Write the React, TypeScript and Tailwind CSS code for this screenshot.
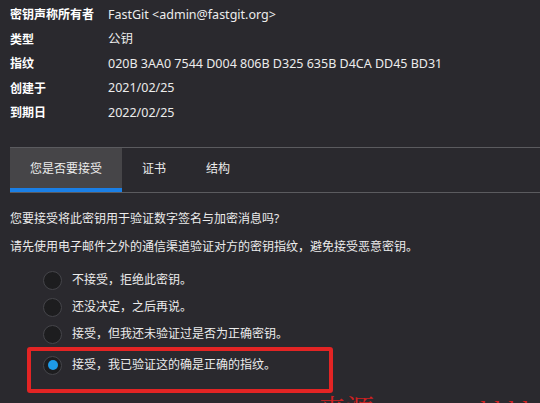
import React from 'react';

const details = [
  { label: '密钥声称所有者', value: 'FastGit <admin@fastgit.org>' },
  { label: '类型', value: '公钥' },
  { label: '指纹', value: '020B 3AA0 7544 D004 806B D325 635B D4CA DD45 BD31' },
  { label: '创建于', value: '2021/02/25' },
  { label: '到期日', value: '2022/02/25' },
];

const tabs = ['您是否要接受', '证书', '结构'];

const choices = [
  '不接受，拒绝此密钥。',
  '还没决定，之后再说。',
  '接受，但我还未验证过是否为正确密钥。',
];

function Radio({ checked }: { checked?: boolean }) {
  return (
    <span className="w-[19px] h-[19px] rounded-full bg-[#1d1d1f] border border-[#45454a] flex items-center justify-center shrink-0">
      {checked && <span className="w-[10px] h-[10px] rounded-full bg-[#1e9be8]" />}
    </span>
  );
}

export default function App() {
  return (
    <div className="relative w-[540px] h-[403px] overflow-hidden bg-[#2a292e] text-[#ececec] text-[12px] font-['Noto_Sans','Noto_Sans_CJK_SC',sans-serif]">
      {/* 密钥信息 */}
      <div className="pl-[10px] pt-[3px]">
        {details.map((d) => (
          <div key={d.label} className="flex items-center h-[24.5px]">
            <span className="w-[98px] font-bold text-white">{d.label}</span>
            <span className="text-[12.5px]">{d.value}</span>
          </div>
        ))}
      </div>

      {/* 选项卡 */}
      <div className="ml-[10px] mt-[21px] border-t border-b border-[#5b5b5f] flex h-[46px]">
        {tabs.map((t, i) => (
          <div
            key={t}
            className={
              i === 0
                ? 'px-5 flex items-center justify-center bg-[#464548] border-b-4 border-[#1a7fe6] pt-[2px]'
                : 'px-5 flex items-center justify-center pb-[2px]'
            }
          >
            {t}
          </div>
        ))}
      </div>

      <div className="pl-[10px] pt-[17px] leading-[18px]">
        <p>您要接受将此密钥用于验证数字签名与加密消息吗?</p>
        <p className="mt-[10px]">请先使用电子邮件之外的通信渠道验证对方的密钥指纹，避免接受恶意密钥。</p>
      </div>

      <div className="mt-[11px]">
        {choices.map((c) => (
          <div key={c} className="flex items-center h-[27px] pl-[43px] gap-[10px]">
            <Radio />
            <span>{c}</span>
          </div>
        ))}
        <div className="ml-[27px] w-[306px] h-[46px] -mt-[1px] border-4 border-[#e32424] rounded-[3px] pl-[12px] pt-[1px]">
          <div className="flex items-center h-[27px] gap-[10px]">
            <Radio checked />
            <span>接受，我已验证这的确是正确的指纹。</span>
          </div>
        </div>
      </div>

      {/* 水印 */}
      <div className="absolute left-[318px] top-[390px] whitespace-nowrap text-[#cf2020] text-[28px] font-['Liberation_Serif','Noto_Serif_CJK_SC',serif]">
        来源：www.ahhhhfs.com
      </div>
    </div>
  );
}
